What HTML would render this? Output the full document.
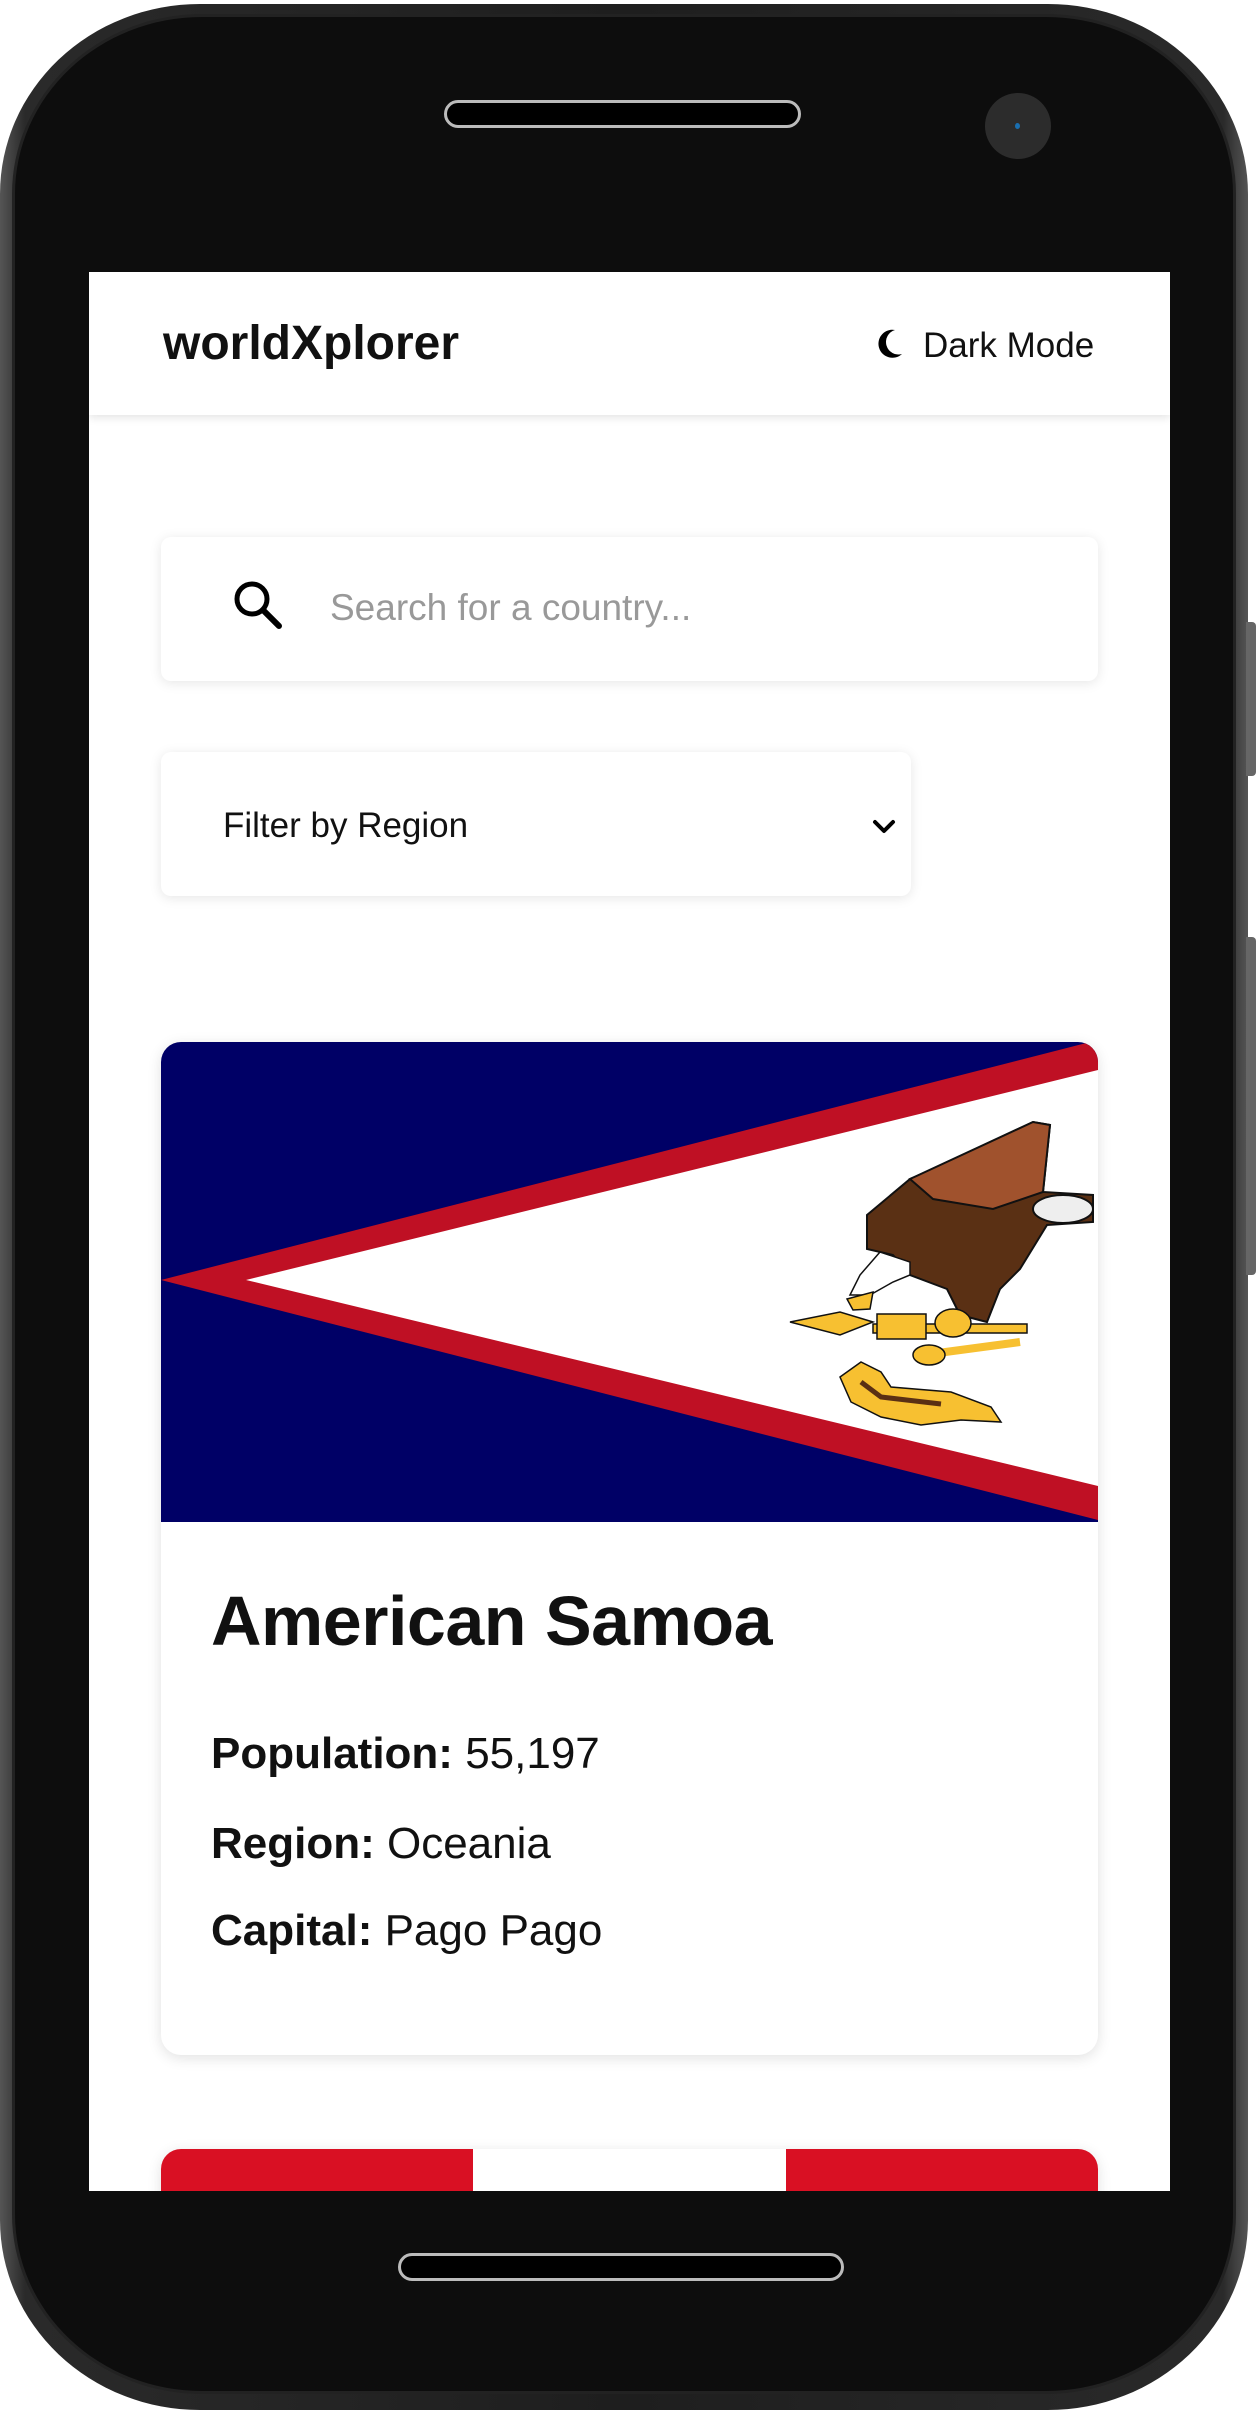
<!DOCTYPE html>
<html><head><meta charset="utf-8"><style>
*{margin:0;padding:0;box-sizing:border-box}
html,body{width:1260px;height:2415px;background:#fff;overflow:hidden;position:relative;font-family:"Liberation Sans",Arial,sans-serif}
.abs{position:absolute}
#body{left:0;top:4px;width:1248px;height:2406px;border-radius:200px/190px;background:linear-gradient(90deg,#555 0,#2a2a2a 2%,#1e1e1e 50%,#2a2a2a 98%,#555 100%)}
#inner{left:12px;top:14px;width:1224px;height:2380px;border-radius:190px/180px;background:#0d0d0d;border:3px solid #222}
#screen{left:89px;top:272px;width:1081px;height:1919px;background:#fff;overflow:hidden}
.sbtn{background:#666;border-radius:0 4px 4px 0}
</style></head><body>
<div id="body" class="abs"></div>
<div id="inner" class="abs"></div>
<div class="abs sbtn" style="left:1246px;top:622px;width:10px;height:154px"></div>
<div class="abs sbtn" style="left:1246px;top:937px;width:10px;height:338px"></div>
<div class="abs" style="left:444px;top:100px;width:357px;height:28px;border:3px solid #bbb;border-radius:14px;background:#000"></div>
<div class="abs" style="left:985px;top:93px;width:66px;height:66px;border-radius:50%;background:#2c2c2c"></div>
<div class="abs" style="left:1015px;top:123px;width:5px;height:6px;border-radius:50%;background:#1a6fb0"></div>
<div class="abs" style="left:398px;top:2253px;width:446px;height:28px;border:3px solid #bbb;border-radius:14px;background:#000"></div>

<div id="screen" class="abs">
  <div class="abs" style="left:0;top:0;width:1081px;height:143px;background:#fff;box-shadow:0 3px 8px rgba(0,0,0,0.1)"></div>
  <div class="abs" style="left:74px;top:44px;font-size:48px;font-weight:bold;color:#111;line-height:56px">worldXplorer</div>
  <svg class="abs" style="left:786px;top:57px" width="28" height="29" viewBox="0 0 28 29"><path d="M20 1 A14 14 0 1 0 27 25 A12 12 0 0 1 20 1Z" fill="#000"/></svg>
  <div class="abs" style="left:834px;top:54px;font-size:35px;color:#111;line-height:40px">Dark Mode</div>

  <div class="abs" style="left:72px;top:265px;width:937px;height:144px;border-radius:10px;box-shadow:0 2px 12px rgba(0,0,0,0.1)"></div>
  <svg class="abs" style="left:140px;top:305px" width="60" height="60" viewBox="0 0 60 60"><circle cx="23" cy="22" r="15" fill="none" stroke="#000" stroke-width="5"/><path d="M34 33 L50 49" stroke="#000" stroke-width="6" stroke-linecap="round"/></svg>
  <div class="abs" style="left:241px;top:314px;font-size:37px;color:#999;line-height:44px">Search for a country...</div>

  <div class="abs" style="left:72px;top:480px;width:750px;height:144px;border-radius:10px;box-shadow:0 2px 12px rgba(0,0,0,0.1)"></div>
  <div class="abs" style="left:134px;top:533px;font-size:35px;color:#111;line-height:42px">Filter by Region</div>
  <svg class="abs" style="left:781px;top:545px" width="28" height="20" viewBox="0 0 28 20"><path d="M5 5 L14 14 L23 5" fill="none" stroke="#000" stroke-width="4" stroke-linecap="round" stroke-linejoin="round"/></svg>

  <div class="abs" style="left:72px;top:770px;width:937px;height:1013px;border-radius:20px;overflow:hidden;box-shadow:0 3px 14px rgba(0,0,0,0.12);background:#fff">
    <svg width="937" height="480" viewBox="0 0 937 480" style="display:block">
      <rect width="937" height="480" fill="#000066"/>
      <polygon points="0,238 937,-2 937,478" fill="#bf1024"/>
      <polygon points="85,238 937,28 937,444" fill="#fff"/>
      <polygon points="706,173 749,137 782,123 872,80 889,83 882,150 932,153 932,180 886,183 859,227 839,247 826,280 799,273 786,247 749,233 732,213 706,207" fill="#5a3014" stroke="#111" stroke-width="2"/>
      <polygon points="749,137 872,80 889,83 882,150 832,167 772,157" fill="#a0522d" stroke="#111" stroke-width="2"/>
      <ellipse cx="902" cy="167" rx="30" ry="14" fill="#eee" stroke="#111" stroke-width="2"/>
      <polygon points="689,253 699,233 719,210 749,220 749,233 732,240 709,253" fill="#fff" stroke="#111" stroke-width="1.5"/>
      <polygon points="686,257 712,250 709,267 692,268" fill="#f7c031" stroke="#111" stroke-width="1.5"/>
      <polygon points="629,280 679,270 712,280 679,293" fill="#f7c031" stroke="#111" stroke-width="1.5"/>
      <rect x="712" y="282" width="154" height="9" fill="#f7c031" stroke="#111" stroke-width="1.5"/>
      <rect x="716" y="272" width="49" height="25" fill="#f7c031" stroke="#111" stroke-width="1.5"/>
      <ellipse cx="792" cy="281" rx="18" ry="14" fill="#f7c031" stroke="#111" stroke-width="1.5"/>
      <path d="M762 313 L859 300" stroke="#f7c031" stroke-width="8"/>
      <ellipse cx="768" cy="313" rx="16" ry="10" fill="#f7c031" stroke="#111" stroke-width="1.5"/>
      <polygon points="679,335 700,320 720,330 730,345 790,350 830,365 840,380 800,378 760,383 720,375 690,360" fill="#f7c031" stroke="#111" stroke-width="1.5"/>
      <path d="M700 340 L720 355 L780 362" stroke="#5a3014" stroke-width="5" fill="none"/>
    </svg>
    <div class="abs" style="left:50px;top:539px;font-size:70px;font-weight:bold;color:#111;line-height:80px;letter-spacing:-0.5px">American Samoa</div>
    <div class="abs" style="left:50px;top:685px;font-size:44px;color:#111;line-height:54px"><b>Population:</b> 55,197</div>
    <div class="abs" style="left:50px;top:775px;font-size:44px;color:#111;line-height:54px"><b>Region:</b> Oceania</div>
    <div class="abs" style="left:50px;top:862px;font-size:44px;color:#111;line-height:54px"><b>Capital:</b> Pago Pago</div>
  </div>

  <div class="abs" style="left:72px;top:1877px;width:937px;height:120px;border-radius:20px;overflow:hidden;box-shadow:0 3px 14px rgba(0,0,0,0.12);display:flex">
    <div style="flex:1;background:#d91023"></div><div style="flex:1;background:#fff"></div><div style="flex:1;background:#d91023"></div>
  </div>
</div>
</body></html>
